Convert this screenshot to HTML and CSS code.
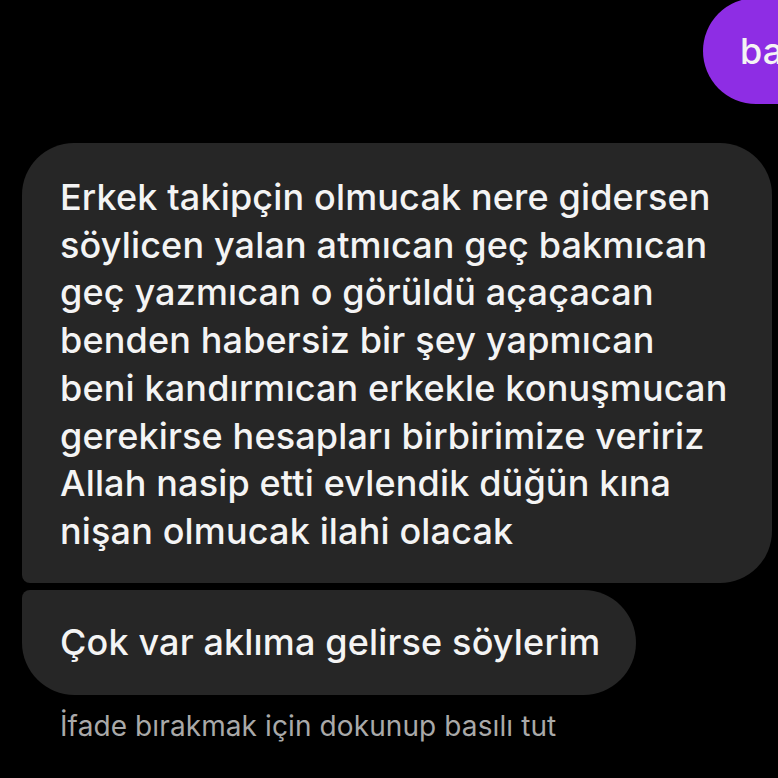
FILE: index.html
```html
<!DOCTYPE html>
<html lang="tr">
<head>
    <meta charset="UTF-8">
    <meta name="viewport" content="width=device-width, initial-scale=1.0">
    <title>Sohbet</title>
    <link rel="stylesheet" href="styles.css">
</head>
<body>

    <div class="chat">
        <div class="row row-out">
            <div class="bubble bubble-out">ba</div>
        </div>

        <div class="row row-in first">
            <div class="bubble bubble-in bubble-top">
                Erkek takipçin olmucak nere gidersen<br>
                söylicen yalan atmıcan geç bakmıcan<br>
                geç yazmıcan o görüldü açaçacan<br>
                benden habersiz bir şey yapmıcan<br>
                beni kandırmıcan erkekle konuşmucan<br>
                gerekirse hesapları birbirimize veririz<br>
                Allah nasip etti evlendik düğün kına<br>
                nişan olmucak ilahi olacak
            </div>
        </div>

        <div class="row row-in">
            <div class="bubble bubble-in bubble-bottom">Çok var aklıma gelirse söylerim</div>
        </div>

        <p class="hint">İfade bırakmak için dokunup basılı tut</p>
    </div>

</body>
</html>
```

FILE: styles.css
```css
body {
    margin: 0;
    background: #000;
    font-family: Inter, Roboto, "Noto Sans", sans-serif;
    overflow: hidden;
}
.chat {
    display: flex;
    flex-direction: column;
    width: 778px;
    overflow: hidden;
}
.row {
    display: flex;
}
.row-out {
    justify-content: flex-end;
    margin-top: -2px;
}
.row-in {
    padding-left: 22px;
    margin-top: 7px;
}
.row-in.first {
    margin-top: 39px;
}
.bubble {
    color: #f4f4f4;
    font-size: 36px;
    font-weight: 500;
    line-height: 47.7px;
    letter-spacing: 0.15px;
}
.bubble-out {
    background: #8e2de4;
    width: 140px;
    height: 106px;
    line-height: 106px;
    margin-right: -65px;
    padding-left: 37px;
    border-radius: 53px;
    box-sizing: border-box;
}
.bubble-in {
    background: #262626;
}
.bubble-top {
    width: 750px;
    box-sizing: border-box;
    padding: 31px 20px 27px 38px;
    border-radius: 52px 52px 52px 8px;
}
.bubble-bottom {
    padding: 29px 36px 29px 38px;
    border-radius: 8px 53px 53px 53px;
}
.hint {
    margin: 14px 0 0 60px;
    color: #a9a9a9;
    font-size: 28px;
    letter-spacing: 0.1px;
}
```
